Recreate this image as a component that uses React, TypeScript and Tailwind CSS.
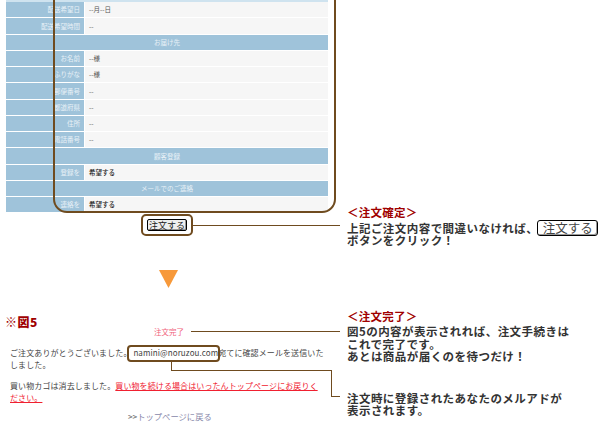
const jp = "font-['Noto_Sans_CJK_JP',sans-serif]";

const rows: [string, string, boolean?][] = [
  ["配送希望日", "--月--日"],
  ["配送希望時間", "--"],
  ["お届け先", "", true],
  ["お名前", "--様"],
  ["ふりがな", "--様"],
  ["郵便番号", "--"],
  ["都道府県", "--"],
  ["住所", "--"],
  ["電話番号", "--"],
  ["顧客登録", "", true],
  ["登録を", "希望する"],
  ["メールでのご連絡", "", true],
  ["連絡を", "希望する"],
];

const noteTitle = "text-[11.5px] font-bold leading-[14px] tracking-[0.25px] text-[#a00000]";
const noteText = "text-[11.5px] font-bold leading-[12.5px] tracking-[0.45px] text-[#333]";

function OrderButton({ big }: { big?: boolean }) {
  return (
    <span
      className={
        big
          ? "-ml-[1px] inline-flex h-[16px] w-[61px] items-center justify-center rounded-[3px] border border-black bg-white text-[12.5px] font-normal leading-none tracking-normal text-[#444] shadow-[inset_-1px_-1px_0_#999]"
          : "flex h-[12px] w-[40px] items-center justify-center rounded-[2px] border border-black bg-[#eeeeee] text-[9px] leading-none text-[#222] shadow-[inset_-1px_-1px_0_#999]"
      }
    >
      注文する
    </span>
  );
}

export default function App() {
  return (
    <div className={`relative flex h-[424px] w-[600px] flex-col overflow-hidden bg-white ${jp}`}>
      {/* confirm step */}
      <section className="flex h-[240px]">
        <div className="flex w-[347px] flex-col">
          <div className="ml-[6px] flex w-[322px] flex-col gap-[1px] border-t-2 border-[#cfe3ef] text-[6.5px] leading-none">
            {rows.map(([label, value, head], i) =>
              head ? (
                <div key={i} className="flex h-[15.25px] items-center justify-center bg-[#9fc3da] text-[#e8f1f7]">
                  {label}
                </div>
              ) : (
                <div key={i} className="flex h-[15.25px] gap-[1px]">
                  <div className="flex w-[78px] items-center justify-end bg-[#9fc3da] pr-[4px] text-[#e8f1f7]">{label}</div>
                  <div className={`flex flex-1 items-center bg-[#f6f6f6] pl-[4px] ${value === "希望する" ? "font-medium text-[#222]" : "text-[#555]"}`}>{value}</div>
                </div>
              )
            )}
          </div>
          <div className="mt-[2px] flex items-center pl-[141px] pr-[7px]">
            <div className="flex h-[22px] w-[52px] items-center justify-center rounded-[5px] border-2 border-[#6f4b1f]">
              <OrderButton />
            </div>
            <div className="h-px flex-1 bg-[#6f4b1f]" />
          </div>
        </div>
        <div className="flex flex-1 flex-col pt-[205px]">
          <div className={noteTitle}>＜注文確定＞</div>
          <div className={`${noteText} mt-[1px] leading-[12px]`}>
            <div className="flex h-[16px] items-center">
              上記ご注文内容で間違いなければ、
              <OrderButton big />
            </div>
            <div className="-mt-[2px]">ボタンをクリック！</div>
          </div>
        </div>
      </section>

      {/* arrow */}
      <div className="pl-[159px] pt-[30px]">
        <svg className="block" width="19" height="18" viewBox="0 0 19 18">
          <path d="M0 0H19L9.5 18Z" fill="#f7993a" />
        </svg>
      </div>

      {/* done step */}
      <section className="flex flex-1 pt-[21px]">
        <div className="flex w-[347px] flex-col pt-[7px]">
          <div className="h-[10px] pl-[5px] text-[12px] font-black leading-[12px] tracking-[0.5px] text-[#a00000]">※図5</div>
          <div className="flex h-[11px] items-center gap-[7px] pl-[154px] pr-[7px] text-[7.5px] leading-none text-[#f0607a]">
            注文完了
            <div className="h-px flex-1 bg-[#6f4b1f]" />
          </div>
          <div className="ml-[10px] mt-[10px] w-[314px] text-[8px] leading-[12px] tracking-[0.1px] text-[#444]">
            <p>ご注文ありがとうございました。 namini@noruzou.com宛てに確認メールを送信いたしました。</p>
            <p className="mt-[9px]">
              買い物カゴは消去しました。<span className="text-[#f02030] underline">買い物を続ける場合はいったんトップページにお戻りください。</span>
            </p>
          </div>
          <div className="ml-[128px] mt-[6px] text-[8.3px] leading-[12px] text-[#666]">
            &gt;&gt;<span className="text-[#8888aa]">トップページに戻る</span>
          </div>
        </div>
        <div className="flex flex-1 flex-col">
          <div className={noteTitle}>＜注文完了＞</div>
          <div className={`${noteText} mt-[2px]`}>
            図5の内容が表示されれば、注文手続きは<br />これで完了です。<br />あとは商品が届くのを待つだけ！
          </div>
          <div className={`${noteText} mt-[29px]`}>
            注文時に登録されたあなたのメルアドが<br />表示されます。
          </div>
        </div>
      </section>

      {/* brown frame and callouts over the content */}
      <div className="absolute left-[53px] top-[-40px] h-[253px] w-[283px] rounded-[14px] border-2 border-[#6f4b1f]" />
      <div className="absolute left-[127px] top-[345px] h-[17px] w-[93px] rounded-[4px] border-2 border-[#6f4b1f]" />
      <div className="absolute left-[171px] top-[362px] h-[9px] w-[161px] border-b border-l border-[#6f4b1f]" />
      <div className="absolute left-[331px] top-[370px] h-[27px] w-[9px] border-b border-l border-[#6f4b1f]" />
    </div>
  );
}
